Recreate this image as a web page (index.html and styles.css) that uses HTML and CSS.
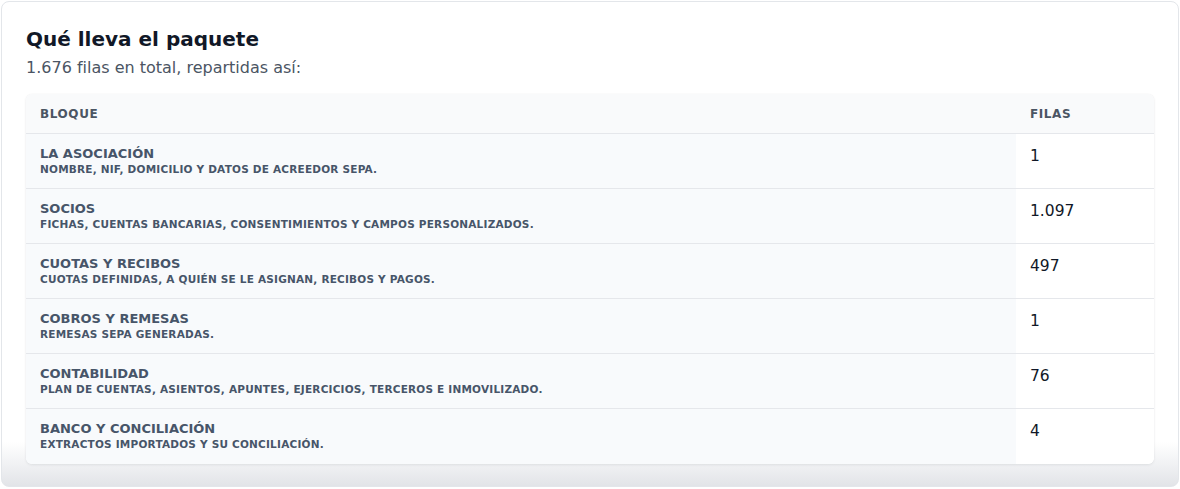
FILE: index.html
```html
<!DOCTYPE html>
<html lang="es">
<head>
<meta charset="utf-8">
<title>Qué lleva el paquete</title>
<link rel="stylesheet" href="styles.css">
</head>
<body>
<section class="card">
  <h2 class="card-title">Qué lleva el paquete</h2>
  <p class="card-sub">1.676 filas en total, repartidas así:</p>
  <div class="table-wrap">
    <table class="tbl">
      <thead>
        <tr><th class="col-block">Bloque</th><th class="col-rows">Filas</th></tr>
      </thead>
      <tbody>
        <tr><th class="blk"><span class="blk-name">La asociación</span><span class="blk-desc">Nombre, NIF, domicilio y datos de acreedor SEPA.</span></th><td class="num">1</td></tr>
        <tr><th class="blk"><span class="blk-name">Socios</span><span class="blk-desc">Fichas, cuentas bancarias, consentimientos y campos personalizados.</span></th><td class="num">1.097</td></tr>
        <tr><th class="blk"><span class="blk-name">Cuotas y recibos</span><span class="blk-desc">Cuotas definidas, a quién se le asignan, recibos y pagos.</span></th><td class="num">497</td></tr>
        <tr><th class="blk"><span class="blk-name">Cobros y remesas</span><span class="blk-desc">Remesas SEPA generadas.</span></th><td class="num">1</td></tr>
        <tr><th class="blk"><span class="blk-name">Contabilidad</span><span class="blk-desc">Plan de cuentas, asientos, apuntes, ejercicios, terceros e inmovilizado.</span></th><td class="num">76</td></tr>
        <tr><th class="blk"><span class="blk-name">Banco y conciliación</span><span class="blk-desc">Extractos importados y su conciliación.</span></th><td class="num">4</td></tr>
      </tbody>
    </table>
  </div>
</section>
</body>
</html>
```

FILE: styles.css
```css
* { box-sizing: border-box; }
html, body { margin: 0; padding: 0; background: #fff; }
body {
  padding: 1px;
  font-family: "DejaVu Sans", "Noto Sans", sans-serif;
  color: #111827;
}
.card {
  border: 1px solid #e3e6ea;
  border-radius: 8px;
  padding: 24px 24px 22px 24px;
  background: linear-gradient(to bottom, #ffffff 0, #ffffff calc(100% - 44px), #e2e4e8 100%);
}
.card-title {
  margin: 0;
  font-size: 20px;
  line-height: 26px;
  font-weight: 700;
  color: #111827;
}
.card-sub {
  margin: 5px 0 16px;
  font-size: 16px;
  line-height: 21px;
  color: #4b5563;
}
.table-wrap {
  border-radius: 6px;
  box-shadow: 0 1px 3px rgba(15, 23, 42, 0.08), 0 0 1px rgba(15, 23, 42, 0.08);
  overflow: hidden;
  background: #fff;
}
.tbl {
  width: 100%;
  border-collapse: collapse;
}
.tbl thead th {
  background: #f9fafb;
  text-align: left;
  font-size: 12px;
  font-weight: 700;
  color: #4b5563;
  text-transform: uppercase;
  letter-spacing: 0.05em;
  padding: 12px 14px 11px;
  line-height: 16px;
  border-bottom: 1px solid #e5e7eb;
}
.col-rows { width: 138px; }
.tbl tbody tr { border-bottom: 1px solid #e5e7eb; }
.tbl tbody tr:last-child { border-bottom: 0; }
.blk {
  background: #f8fafc;
  text-align: left;
  vertical-align: top;
  padding: 12px 14px 0;
  height: 55px;
  color: #475569;
  font-weight: 700;
  text-transform: uppercase;
}
.blk-name {
  display: block;
  font-size: 13px;
  line-height: 15px;
}
.blk-desc {
  display: block;
  margin-top: 1px;
  font-size: 10.5px;
  line-height: 15px;
  letter-spacing: 0.02em;
}
.num {
  vertical-align: top;
  padding: 11px 14px 0;
  font-size: 15.5px;
  line-height: 22px;
  color: #111827;
  background: #fff;
}
```
